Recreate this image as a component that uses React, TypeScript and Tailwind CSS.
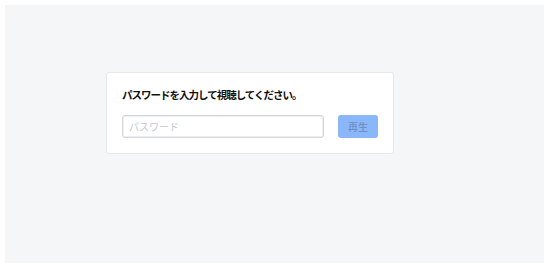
export default function App() {
  return (
    <div className="w-[550px] h-[272px] bg-white p-[5px] pr-[6px] pb-[9px] font-['Noto_Sans_CJK_JP',sans-serif]">
      <div className="h-full bg-[#f5f6f8] pt-[67px] pl-[101px]">
        <div className="w-[288px] h-[82px] bg-white border border-[#e6e8ec] rounded-[3px] p-[15px]">
          <h1 className="text-[10.5px] leading-[14px] font-bold text-[#111] tracking-[-1px]">
            パスワードを入力して視聴してください。
          </h1>
          <div className="flex items-center gap-[14px] mt-[13px]">
            <input
              type="password"
              placeholder="パスワード"
              className="w-[202px] h-[23px] border border-[#d4d7dc] rounded-[3px] px-[6px] text-[10px] outline-none placeholder:text-[#c3c7cf] shadow-[inset_0_0_0_1px_#eceef1]"
            />
            <button
              disabled
              className="w-[40px] h-[23px] rounded-[3px] bg-[#8ab6fa] text-[#6e8fc2] text-[10px] font-medium"
            >
              再生
            </button>
          </div>
        </div>
      </div>
    </div>
  );
}
